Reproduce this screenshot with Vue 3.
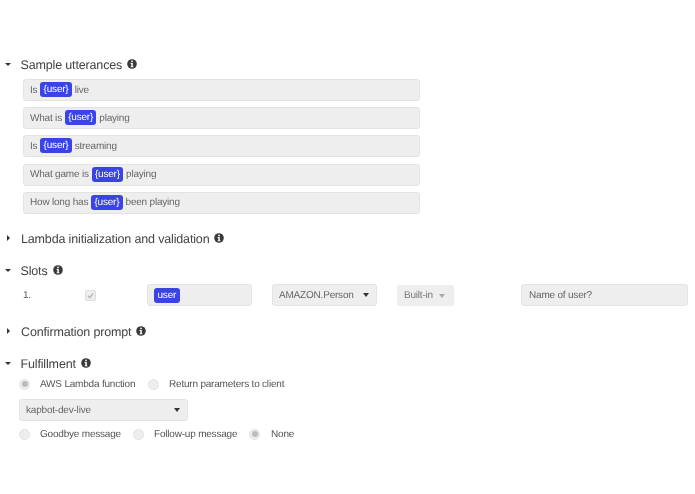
<script setup>
const utterances = [
  ['Is', 'live'],
  ['What is', 'playing'],
  ['Is', 'streaming'],
  ['What game is', 'playing'],
  ['How long has', 'been playing'],
]
</script>

<template>
  <div class="page">
    <section class="sec first">
      <header class="head">
        <span class="caret down"></span>
        <span class="title">Sample utterances</span>
        <svg class="info" viewBox="0 0 10 10"><circle cx="5" cy="5" r="4.8" fill="#3a3a3a"/><rect x="4.2" y="1.7" width="1.6" height="1.5" fill="#fff"/><path d="M3.6 4h2.2v3.4h.7v.9H3.6v-.9h.7V4.9h-.7z" fill="#fff"/></svg>
      </header>
      <div class="utts">
        <div v-for="(u, i) in utterances" :key="i" class="field utt">
          <span>{{ u[0] }}</span><span class="tag">{user}</span><span>{{ u[1] }}</span>
        </div>
      </div>
    </section>

    <section class="sec s-lambda">
      <header class="head">
        <span class="caret right"></span>
        <span class="title">Lambda initialization and validation</span>
        <svg class="info" viewBox="0 0 10 10"><circle cx="5" cy="5" r="4.8" fill="#3a3a3a"/><rect x="4.2" y="1.7" width="1.6" height="1.5" fill="#fff"/><path d="M3.6 4h2.2v3.4h.7v.9H3.6v-.9h.7V4.9h-.7z" fill="#fff"/></svg>
      </header>
    </section>

    <section class="sec s-slots">
      <header class="head">
        <span class="caret down"></span>
        <span class="title">Slots</span>
        <svg class="info" viewBox="0 0 10 10"><circle cx="5" cy="5" r="4.8" fill="#3a3a3a"/><rect x="4.2" y="1.7" width="1.6" height="1.5" fill="#fff"/><path d="M3.6 4h2.2v3.4h.7v.9H3.6v-.9h.7V4.9h-.7z" fill="#fff"/></svg>
      </header>
      <div class="slot">
        <span class="num">1.</span>
        <span class="check">
          <svg viewBox="0 0 10 10"><path d="M2.2 5.2 4.2 7.4 7.9 2.6" fill="none" stroke="#b5b5b5" stroke-width="1.5"/></svg>
        </span>
        <div class="field slot-name"><span class="tag small">user</span></div>
        <div class="field select slot-type">AMAZON.Person<span class="arrow"></span></div>
        <div class="builtin">Built-in<span class="arrow light"></span></div>
        <div class="field prompt">Name of user?</div>
      </div>
    </section>

    <section class="sec s-confirm">
      <header class="head">
        <span class="caret right"></span>
        <span class="title">Confirmation prompt</span>
        <svg class="info" viewBox="0 0 10 10"><circle cx="5" cy="5" r="4.8" fill="#3a3a3a"/><rect x="4.2" y="1.7" width="1.6" height="1.5" fill="#fff"/><path d="M3.6 4h2.2v3.4h.7v.9H3.6v-.9h.7V4.9h-.7z" fill="#fff"/></svg>
      </header>
    </section>

    <section class="sec s-fulfill">
      <header class="head">
        <span class="caret down"></span>
        <span class="title">Fulfillment</span>
        <svg class="info" viewBox="0 0 10 10"><circle cx="5" cy="5" r="4.8" fill="#3a3a3a"/><rect x="4.2" y="1.7" width="1.6" height="1.5" fill="#fff"/><path d="M3.6 4h2.2v3.4h.7v.9H3.6v-.9h.7V4.9h-.7z" fill="#fff"/></svg>
      </header>
      <div class="radios r1">
        <span class="radio on"></span><span class="lbl l1">AWS Lambda function</span>
        <span class="radio"></span><span class="lbl">Return parameters to client</span>
      </div>
      <div class="field select lambda">kapbot-dev-live<span class="arrow"></span></div>
      <div class="radios r2">
        <span class="radio"></span><span class="lbl l2">Goodbye message</span>
        <span class="radio"></span><span class="lbl l3">Follow-up message</span>
        <span class="radio on last"></span><span class="lbl">None</span>
      </div>
    </section>
  </div>
</template>

<style scoped>
.page {
  width: 695px;
  height: 494px;
  box-sizing: border-box;
  padding-top: 56px;
  background: #fff;
  font-family: "Liberation Sans", Arial, sans-serif;
  text-rendering: geometricPrecision;
  color: #666;
  font-size: 10px;
  letter-spacing: -0.2px;
  overflow: hidden;
  filter: blur(0.4px);
}
.sec { display: block; }
.head {
  display: flex;
  align-items: center;
  height: 16px;
  color: #444;
  font-size: 12.5px;
  letter-spacing: -0.15px;
}
.caret { width: 0; height: 0; flex: none; }
.caret.down {
  margin-left: 5px;
  margin-right: 9.5px;
  border-left: 3.5px solid transparent;
  border-right: 3.5px solid transparent;
  border-top: 3.5px solid #333;
}
.caret.right {
  margin-left: 7px;
  margin-right: 11px;
  border-top: 3.5px solid transparent;
  border-bottom: 3.5px solid transparent;
  border-left: 3.5px solid #333;
}
.title { position: relative; top: 0.5px; }
.info { width: 10px; height: 10px; margin-left: 5px; flex: none; }

.utts {
  margin: 7px 0 0 23px;
  width: 397px;
  display: flex;
  flex-direction: column;
  gap: 6.1875px;
}
.field {
  box-sizing: border-box;
  height: 22px;
  background: #eee;
  border: 1px solid #e3e3e3;
  border-radius: 3px;
  display: flex;
  align-items: center;
  padding: 0 6px;
  color: #666;
}
.utt { gap: 3px; }
.tag {
  background: #3a44e6;
  color: #fff;
  border-radius: 3px;
  height: 15px;
  line-height: 15px;
  padding: 0 3.2px;
  margin-top: -1px;
}
.tag.small { padding: 0 3.5px; margin-top: 0; }

.s-lambda { margin-top: 16.25px; }
.s-slots { margin-top: 16px; }
.slot {
  display: flex;
  align-items: center;
  height: 22px;
  margin-top: 6px;
  padding-left: 23px;
}
.num { width: 62px; color: #555; }
.check {
  width: 11px;
  height: 11px;
  box-sizing: border-box;
  border: 1px solid #ddd;
  background: #eee;
  border-radius: 2px;
  display: block;
}
.check svg { display: block; width: 9px; height: 9px; }
.slot-name { margin-left: 51px; width: 105px; padding-left: 6px; }
.select { position: relative; justify-content: flex-start; }
.slot-type { margin-left: 20px; width: 105px; padding: 1px 0 0 6px; }
.arrow {
  position: absolute;
  right: 7px;
  top: 8px;
  width: 0;
  height: 0;
  border-left: 3.5px solid transparent;
  border-right: 3.5px solid transparent;
  border-top: 4px solid #333;
}
.builtin {
  position: relative;
  margin-left: 20px;
  box-sizing: border-box;
  width: 57px;
  height: 21px;
  line-height: 21px;
  padding-left: 7px;
  background: #eee;
  border-radius: 2px;
  color: #777;
}
.arrow.light { border-top-color: #aaa; top: 9px; right: 9px; }
.prompt { margin-left: 67px; width: 167px; padding: 1px 0 0 7px; }

.s-confirm { margin-top: 17px; }
.s-fulfill { margin-top: 16px; }
.radios {
  display: flex;
  align-items: center;
  height: 14px;
  padding-left: 19px;
  color: #555;
}
.r1 { margin-top: 6px; }
.r2 { margin-top: 6px; }
.radio {
  box-sizing: border-box;
  width: 11px;
  height: 11px;
  border-radius: 50%;
  background: #eee;
  border: 1px solid #e2e2e2;
  flex: none;
  position: relative;
  margin-right: 10px;
}
.radio.last { margin-right: 11px; }
.radio.on::after {
  content: "";
  position: absolute;
  left: 1.5px;
  top: 1.5px;
  width: 6px;
  height: 6px;
  border-radius: 50%;
  background: #bbb;
}
.l1 { width: 108px; }
.l2 { width: 93px; }
.l3 { width: 95px; }
.lambda { width: 169px; margin: 8px 0 0 19px; color: #666; }
</style>
